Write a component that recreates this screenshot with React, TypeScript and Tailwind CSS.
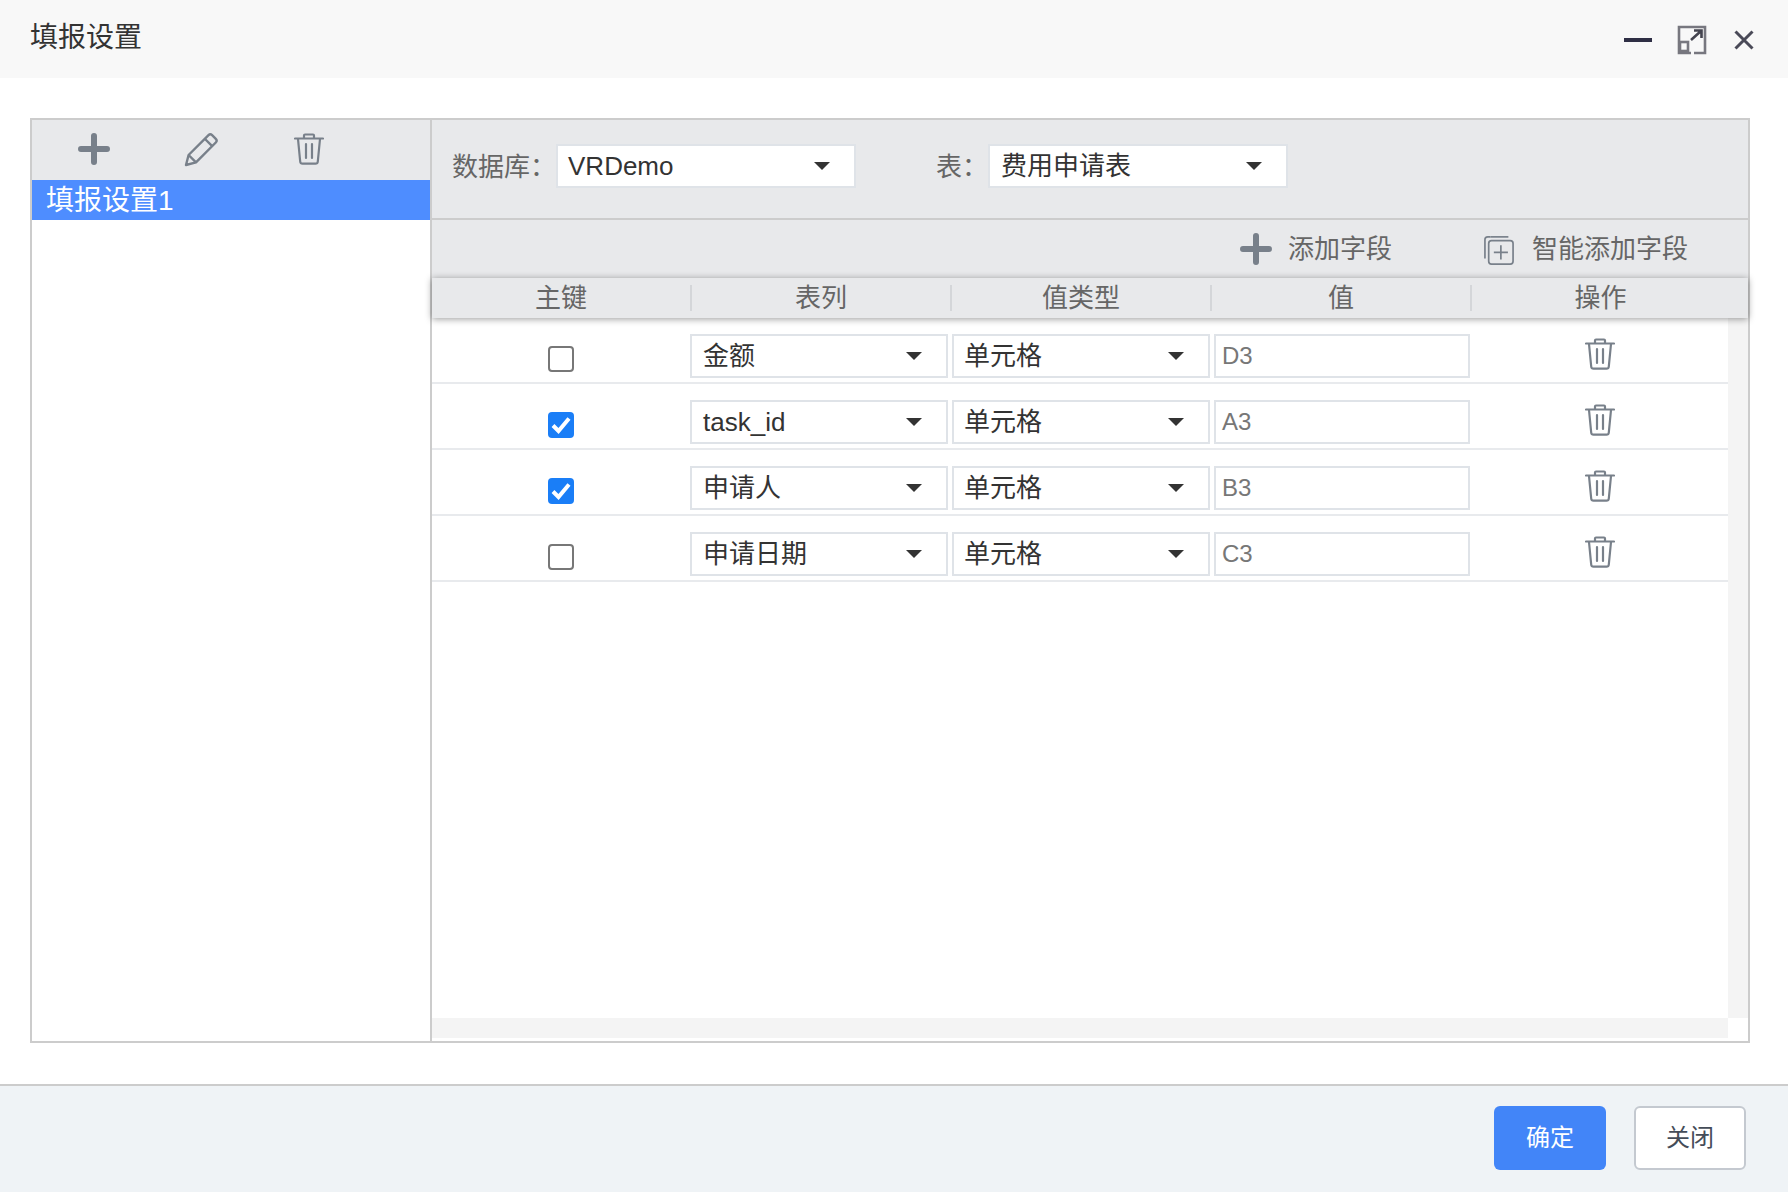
import React from 'react';

const FONT = 'font-["Liberation_Sans","Noto_Sans_CJK_SC",sans-serif]';

function PlusIcon({ className }: { className?: string }) {
  return (
    <svg viewBox="0 0 32 32" className={className} fill="none" stroke="#78808a" strokeWidth="6" strokeLinecap="round">
      <path d="M16 3v26M3 16h26" />
    </svg>
  );
}

function PencilIcon({ className }: { className?: string }) {
  return (
    <svg viewBox="0 0 34 34" className={className} fill="none" stroke="#78808a" strokeWidth="2.4" strokeLinejoin="round">
      <path d="M2 32l2.6-10L24.5 2.2a2.6 2.6 0 0 1 3.6 0l3.7 3.7a2.6 2.6 0 0 1 0 3.6L12 29.4 2 32z" />
      <path d="M4.6 22l7.4 7.4M21 6l7.2 7.2" />
    </svg>
  );
}

function TrashIcon({ className }: { className?: string }) {
  return (
    <svg viewBox="0 0 30 32" className={className} fill="none" stroke="#78808a" strokeWidth="2.2" strokeLinecap="round" strokeLinejoin="round">
      <path d="M1 5.5h28M10 5V2.5a1 1 0 0 1 1-1h8a1 1 0 0 1 1 1V5" />
      <path d="M4 6l2.2 22.5a2.4 2.4 0 0 0 2.4 2.2h12.8a2.4 2.4 0 0 0 2.4-2.2L26 6" />
      <path d="M12 11v14M18 11v14" />
    </svg>
  );
}

function Arrow() {
  return (
    <svg viewBox="0 0 16 8" className="h-2 w-4 shrink-0" fill="#333333">
      <path d="M0 0h16L8 8z" />
    </svg>
  );
}

function Select({ value, className, arrowRight }: { value: string; className: string; arrowRight: string }) {
  return (
    <div className={`flex h-[44px] items-center justify-between border-2 border-[#dfe3e8] bg-white text-[#333333] ${className}`}>
      <span>{value}</span>
      <span className={arrowRight}>
        <Arrow />
      </span>
    </div>
  );
}

function Checkbox({ checked }: { checked: boolean }) {
  if (checked) {
    return (
      <div className="flex h-[26px] w-[26px] items-center justify-center rounded-[4px] bg-[#1a7ef7]">
        <svg viewBox="0 0 26 26" className="h-[26px] w-[26px]" fill="none" stroke="#ffffff" strokeWidth="4">
          <path d="M5 13.500l5.500 5.500L21 6.500" />
        </svg>
      </div>
    );
  }
  return <div className="h-[26px] w-[26px] rounded-[4px] border-2 border-[#777777] bg-white" />;
}

const rows = [
  { checked: false, column: '金额', value: 'D3' },
  { checked: true, column: 'task_id', value: 'A3' },
  { checked: true, column: '申请人', value: 'B3' },
  { checked: false, column: '申请日期', value: 'C3' },
];

const headers = ['主键', '表列', '值类型', '值', '操作'];

export default function App() {
  return (
    <div className={`flex h-[1192px] w-[1788px] flex-col overflow-hidden bg-white ${FONT}`}>
      {/* 标题栏 */}
      <div className="flex h-[78px] items-start justify-between bg-[#f8f8f8] pl-[30px] pr-[34px]">
        <div className="mt-[19px] text-[28px] leading-[38px] text-[#333333]">填报设置</div>
        <div className="mt-[25px] flex items-start">
          <div className="mt-[13px] h-1 w-7 bg-[#2f2f45]" />
          <svg viewBox="0 0 30 30" className="ml-[25px] h-[30px] w-[30px]" fill="none" stroke="#77777f" strokeWidth="2.6">
            <path d="M14 28H2V2h26v26H17" />
            <rect x="3" y="17" width="8" height="9" />
            <path stroke="#44444f" d="M14 15L24 6M17 5.500h7.500V13" />
          </svg>
          <svg viewBox="0 0 20 20" className="ml-[27px] mt-[5px] h-5 w-5" fill="none" stroke="#4a4a58" strokeWidth="3">
            <path d="M1.500 1.500l17 17M18.500 1.500l-17 17" />
          </svg>
        </div>
      </div>

      {/* 主体 */}
      <div className="flex-1 px-[30px] pt-[40px]">
        <div className="flex h-[925px] w-[1720px] border-2 border-[#cccccc]">
          <div className="w-[398px]">
            <div className="flex h-[60px] items-start bg-[#e8e9eb] pl-[46px] pt-[13px]">
              <PlusIcon className="h-8 w-8" />
              <PencilIcon className="ml-[74px] h-[34px] w-[34px]" />
              <TrashIcon className="ml-[76px] h-8 w-[30px]" />
            </div>
            <div className="flex h-10 items-center bg-[#4e8dff] pl-[14px] pt-[2px] text-[28px] text-white">填报设置1</div>
          </div>

          <div className="flex w-[1318px] flex-col border-l-2 border-[#cccccc]">
            <div className="flex h-[100px] items-start border-b-2 border-[#cccccc] bg-[#e8e9eb] pl-5 pt-6 text-[26px]">
              <span className="pt-[1px] leading-[44px] text-[#666666]">数据库：</span>
              <Select value="VRDemo" className="w-[300px] pl-[10px]" arrowRight="mr-[24px]" />
              <span className="ml-[80px] pt-[1px] leading-[44px] text-[#666666]">表：</span>
              <Select value="费用申请表" className="w-[300px] pl-[11px]" arrowRight="mr-[24px]" />
            </div>

            <div className="flex h-[58px] items-start justify-end bg-[#e8e9eb] pr-[60px] pt-[13px] text-[26px] leading-[32px] text-[#666666]">
              <PlusIcon className="h-8 w-8" />
              <span className="ml-4">添加字段</span>
              <svg viewBox="0 0 32 32" className="ml-[92px] mt-[2px] h-[30px] w-[30px]" fill="none" stroke="#78808a" strokeWidth="1.8">
                <path d="M7 2H4a3 3 0 0 0-3 3v20" />
                <path d="M26 2H7" />
                <rect x="5" y="6" width="26" height="25" rx="3" />
                <path d="M18 11v15M10.500 18.500h15" />
              </svg>
              <span className="ml-[18px]">智能添加字段</span>
            </div>

            <div className="relative z-10 flex h-10 shrink-0 items-center bg-[#e8e9eb] text-[26px] text-[#666666] shadow-[0_1px_7px_rgba(0,0,0,0.4)]">
              {headers.map((h, i) => (
                <div key={h} className={`flex h-[26px] w-[260px] items-center justify-center ${i < 4 ? 'border-r-2 border-[#d4d6d9]' : 'pr-[3px]'}`}>
                  {h}
                </div>
              ))}
            </div>

            <div className="flex flex-1">
              <div className="flex w-[1296px] flex-col">
                <div className="flex-1">
                  {rows.map((r) => (
                    <div key={r.column} className="flex h-[66px] border-b-2 border-[#e8eaed] text-[26px]">
                      <div className="flex w-[258px] justify-center pt-7">
                        <Checkbox checked={r.checked} />
                      </div>
                      <div className="w-[262px] pt-4">
                        <Select value={r.column} className="w-[258px] pl-[11px]" arrowRight="mr-[24px]" />
                      </div>
                      <div className="w-[262px] pt-4">
                        <Select value="单元格" className="w-[258px] pl-[10px]" arrowRight="mr-[24px]" />
                      </div>
                      <div className="w-[258px] pt-4">
                        <div className="flex h-[44px] w-[256px] items-center border-2 border-[#dfe3e8] bg-white pl-[6px] text-[24px] text-[#777777]">
                          {r.value}
                        </div>
                      </div>
                      <div className="flex flex-1 justify-center pt-5">
                        <TrashIcon className="h-8 w-[30px]" />
                      </div>
                    </div>
                  ))}
                </div>
                <div className="mb-[3px] h-5 bg-[#f4f4f4]" />
              </div>
              <div className="mb-[23px] w-5 bg-[#f4f4f4]" />
            </div>
          </div>
        </div>
      </div>

      {/* 底部按钮 */}
      <div className="flex h-[108px] items-start justify-end border-t-2 border-[#cccccc] bg-[#eff3f6] pr-[42px] pt-5 text-[24px]">
        <button className="h-16 w-[112px] rounded-[6px] bg-[#4285f8] text-white">确定</button>
        <button className="ml-7 h-16 w-[112px] rounded-[6px] border-2 border-[#c4c9d0] bg-white text-[#444c58]">关闭</button>
      </div>
    </div>
  );
}
